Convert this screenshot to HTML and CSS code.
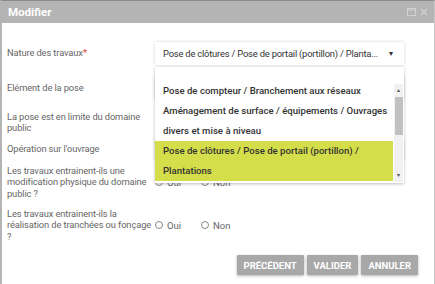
FILE: index.html
```html
<!DOCTYPE html>
<html lang="fr">
<head>
    <meta charset="UTF-8">
    <meta name="viewport" content="width=device-width, initial-scale=1.0">
    <title>Modifier</title>
    <link rel="stylesheet" href="styles.css">
</head>
<body>
    <div class="dialog">
        <div class="titlebar">
            <span class="title">Modifier</span>
            <span class="tools">
                <svg width="9" height="8" viewBox="0 0 9 8"><rect x="0.5" y="0.5" width="8" height="7" fill="none" stroke="#d2d2d2"/><line x1="0.5" y1="2" x2="8.5" y2="2" stroke="#d2d2d2"/></svg>
                <svg width="8" height="8" viewBox="0 0 8 8"><path d="M1 1 L7 7 M7 1 L1 7" stroke="#d2d2d2" stroke-width="1.2"/></svg>
            </span>
        </div>
        <div class="content">
            <div class="form">
                <label>Nature des travaux<span class="req">*</span></label>
                <div class="field">
                    <div class="select">
                        <span>Pose de clôtures / Pose de portail (portillon) / Planta...</span>
                        <span class="caret">&#9662;</span>
                    </div>
                    <div class="dropdown">
                        <ul class="options">
                            <li>Pose de compteur / Branchement aux réseaux</li>
                            <li>Aménagement de surface / équipements / Ouvrages divers et mise à niveau</li>
                            <li class="selected">Pose de clôtures / Pose de portail (portillon) / Plantations</li>
                        </ul>
                        <div class="scrollbar">
                            <span class="arrow">&#9652;</span>
                            <span class="thumb"></span>
                            <span class="arrow down">&#9662;</span>
                        </div>
                    </div>
                </div>

                <label>Elément de la pose</label>
                <div class="field"><div class="select"></div></div>

                <label>La pose est en limite du domaine public</label>
                <div class="field"></div>

                <label>Opération sur l'ouvrage</label>
                <div class="field"><div class="select"></div></div>

                <label>Les travaux entrainent-ils une modification physique du domaine public ?</label>
                <div class="field radios">
                    <span class="radio"><i></i>Oui</span>
                    <span class="radio"><i></i>Non</span>
                </div>

                <label>Les travaux entrainent-ils la réalisation de tranchées ou fonçage ?</label>
                <div class="field radios">
                    <span class="radio"><i></i>Oui</span>
                    <span class="radio"><i></i>Non</span>
                </div>
            </div>
            <div class="buttons">
                <button>Précédent</button>
                <button>Valider</button>
                <button>Annuler</button>
            </div>
        </div>
    </div>
</body>
</html>
```

FILE: styles.css
```css
body {
    margin: 0;
    background-color: #fff;
    font-family: Roboto, "Liberation Sans", sans-serif;
}
.dialog {
    height: 284px;
    box-sizing: border-box;
    border-top: 1px solid #8a8a8a;
    border-left: 2px solid #b4b4b4;
    border-right: 1px solid #c8c8c8;
    background-color: #fff;
}
.titlebar {
    height: 22px;
    background-color: #b4b4b4;
    display: flex;
    align-items: center;
    justify-content: space-between;
    padding: 0 6px 0 6px;
}
.title {
    color: #fff;
    font-size: 11.5px;
    font-weight: bold;
}
.tools {
    display: flex;
    gap: 4px;
    align-items: center;
}
.content {
    padding: 18px 0 0 5px;
}
.form {
    display: grid;
    grid-template-columns: 148px 249px;
    grid-template-rows: 24px 46px 22px 32px 34px 52px;
    align-items: center;
}
label {
    font-size: 9.3px;
    line-height: 11.5px;
    letter-spacing: -0.1px;
    color: #666;
    padding-right: 1px;
}
.req {
    color: #e53935;
}
.field {
    position: relative;
}
.select {
    height: 23px;
    box-sizing: border-box;
    display: flex;
    align-items: center;
    justify-content: space-between;
    padding: 0 11px 0 8px;
    background-color: #fff;
    box-shadow: 0 0 3px rgba(0, 0, 0, 0.18);
    font-size: 9.4px;
    letter-spacing: -0.2px;
    color: #333;
    white-space: nowrap;
}
.caret {
    font-size: 8px;
    color: #333;
}
.dropdown {
    position: absolute;
    top: 25px;
    left: 0;
    width: 249px;
    height: 116px;
    box-sizing: border-box;
    padding-top: 14px;
    background-color: #fff;
    box-shadow: 0 1px 3px rgba(0, 0, 0, 0.25);
    z-index: 2;
}
.options {
    list-style: none;
    margin: 0;
    padding: 0 11px 0 0;
}
.options li {
    padding: 0 0 0 8px;
    font-size: 9.6px;
    font-weight: 500;
    line-height: 20px;
    color: #333;
}
.options li.selected {
    background-color: #d4dd4a;
}
.scrollbar {
    position: absolute;
    top: 17px;
    right: 1px;
    bottom: 1px;
    width: 9px;
    background-color: #f1f1f1;
    display: flex;
    flex-direction: column;
    align-items: center;
}
.arrow {
    font-size: 6px;
    line-height: 11px;
    color: #555;
}
.arrow.down {
    margin-top: auto;
    line-height: 14px;
}
.thumb {
    width: 8px;
    height: 38px;
    margin-top: 2px;
    background-color: #c1c1c1;
}
.radios {
    display: flex;
    gap: 20px;
    font-size: 9.5px;
    color: #666;
}
.radio {
    display: flex;
    align-items: center;
    gap: 4px;
}
.radio i {
    width: 6px;
    height: 6px;
    border: 1px solid #888;
    border-radius: 50%;
}
.buttons {
    display: flex;
    justify-content: flex-end;
    gap: 3px;
    padding: 4px 16px 0 0;
}
button {
    height: 20px;
    padding: 0 7px;
    border: none;
    border-radius: 1px;
    background-color: #a8a8a8;
    color: #fff;
    font-family: Roboto, "Liberation Sans", sans-serif;
    font-size: 9.5px;
    font-weight: bold;
    text-transform: uppercase;
    box-shadow: 0 1px 3px rgba(0, 0, 0, 0.3);
}
```
